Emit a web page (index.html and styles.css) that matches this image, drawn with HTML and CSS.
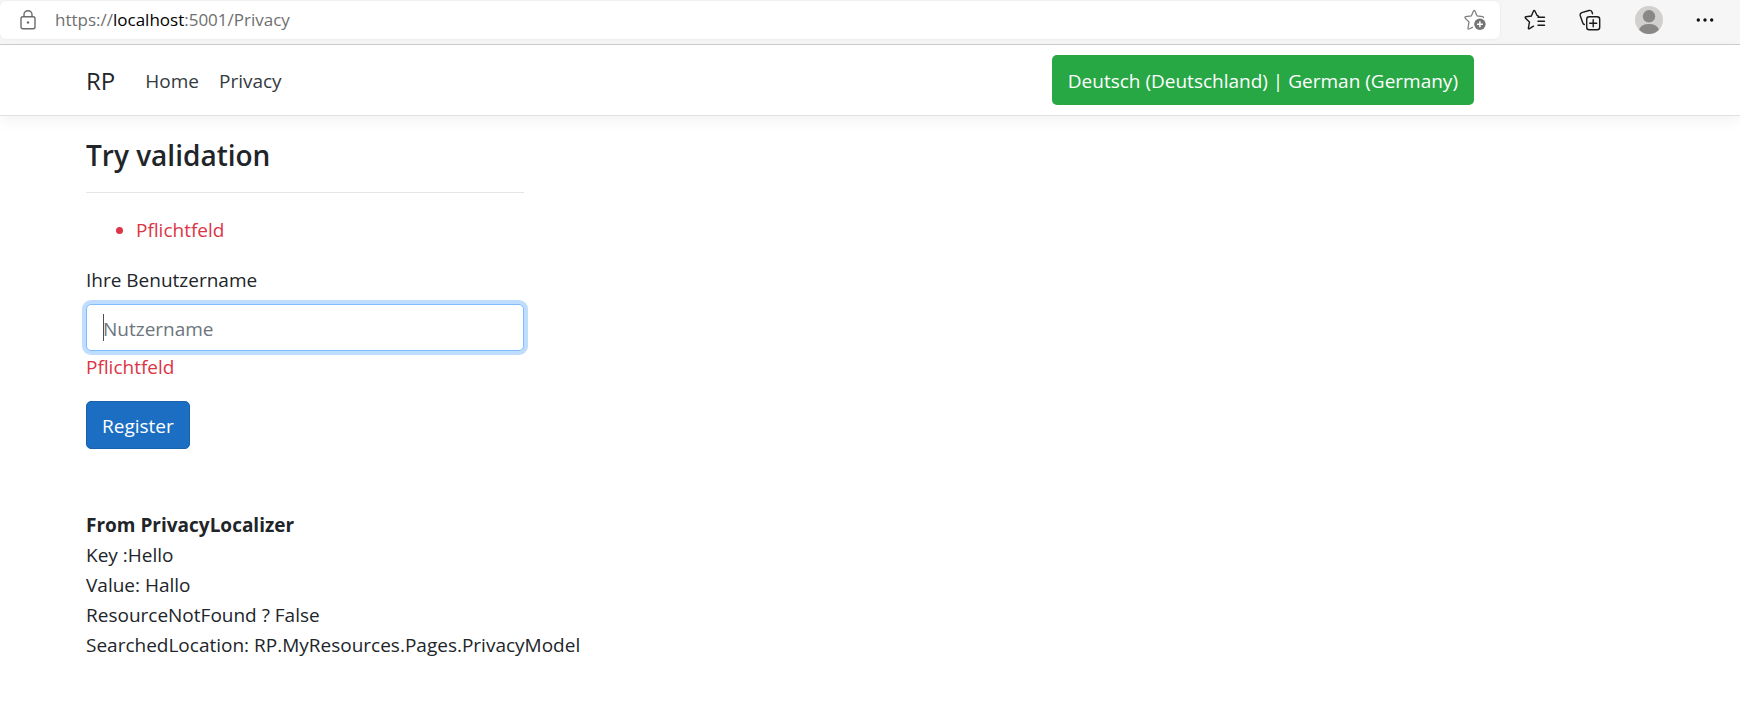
FILE: index.html
```
<!DOCTYPE html>
<html lang="de">
<head>
<meta charset="utf-8">
<title>Privacy - RP</title>
<link rel="stylesheet" href="styles.css">
</head>
<body>
<div class="browser-bar">
  <div class="address">
    <svg class="lock" width="16" height="20" viewBox="0 0 16 20" fill="none" stroke="#6b6b6b" stroke-width="1.4"><rect x="1" y="6.7" width="14" height="12" rx="1.8"/><path d="M4 6.500V4.500a4 3.800 0 0 1 8 0v2"/><circle cx="8" cy="12.500" r="1.200" fill="#6b6b6b" stroke="none"/></svg>
    <span class="url">https://<span class="host">localhost</span>:5001/Privacy</span>
    <button class="icon-button add-favorite" aria-label="Add to favorites"><svg width="22" height="22" viewBox="0 0 22 22" fill="none"><path d="M9 18.200 L5 20 Q3.800 20.300 4 19 L5 13 L1.200 9.200 Q.5 8 1.800 7.700 L7.300 7 L9.500 2 Q10.200 .9 10.900 2 L13.100 7 L18.600 7.700 Q20 8.200 19.400 9" stroke="#808080" stroke-width="1.300"/><circle cx="15.900" cy="15.300" r="5.700" fill="#737373"/><path d="M12.900 15.300h6M15.900 12.300v6" stroke="#fff" stroke-width="1.500"/></svg></button>
  </div>
  <div class="tools">
    <button class="icon-button" aria-label="Favorites"><svg width="22" height="22" viewBox="0 0 22 22" fill="none" stroke="#1b1b1b" stroke-width="1.400" stroke-linecap="round"><path d="M9.500 17.200 L5.500 19.700 Q4.200 20.300 4.400 19 L5.500 13 L1.500 9.200 Q.7 8 2 7.700 L7.300 7 L9.500 2 Q10.200 .9 10.900 2 L13.100 6.500 L14.500 7.200M14 8.200h6.500M14 12.200h6.500M14 16.200h6.500"/></svg></button>
    <button class="icon-button" aria-label="Collections"><svg width="22" height="22" viewBox="0 0 22 22" fill="none" stroke="#1b1b1b" stroke-width="1.400" stroke-linecap="round"><rect x="7.700" y="7.700" width="13" height="13" rx="2.500"/><path d="M14.200 10.700v7M10.700 14.200h7M5.300 15.500Q4.200 15.200 3.700 13.800L1.200 6.500Q.8 4.500 2.800 3.700L10 1.500Q12.200 1 13 3L13.500 4.700"/></svg></button>
    <button class="icon-button" aria-label="Profile"><svg width="28" height="28" viewBox="0 0 28 28"><circle cx="14" cy="14" r="14" fill="#d2d0ce"/><circle cx="14" cy="10.300" r="6.200" fill="#8a8886"/><path d="M4 23.800Q6 18 14 18t10 5.800Q20 28 14 28T4 23.800Z" fill="#8a8886"/></svg></button>
    <button class="icon-button" aria-label="Settings and more"><svg width="18" height="18" viewBox="0 0 18 18" fill="#111"><circle cx="2.300" cy="9" r="1.700"/><circle cx="9" cy="9" r="1.700"/><circle cx="15.700" cy="9" r="1.700"/></svg></button>
  </div>
</div>
<header class="navbar">
  <div class="container nav-inner">
    <a class="brand" href="#">RP</a>
    <nav class="links"><a href="#">Home</a><a href="#">Privacy</a></nav>
    <button class="culture">Deutsch (Deutschland) | German (Germany)</button>
  </div>
</header>
<main class="container">
  <form class="form">
    <h4 class="title">Try validation</h4>
    <hr class="rule">
    <ul class="summary"><li>Pflichtfeld</li></ul>
    <label class="label" for="username">Ihre Benutzername</label>
    <div class="field">
      <input class="input" id="username" type="text" placeholder="Nutzername">
      <span class="caret"></span>
    </div>
    <span class="error">Pflichtfeld</span>
    <button class="submit" type="button">Register</button>
  </form>
  <section class="details">
    <strong>From PrivacyLocalizer</strong>
    <div>Key :Hello</div>
    <div>Value: Hallo</div>
    <div>ResourceNotFound ? False</div>
    <div>SearchedLocation: RP.MyResources.Pages.PrivacyModel</div>
  </section>
</main>
</body>
</html>
```
FILE: styles.css
```
* { box-sizing: border-box; }
body {
  margin: 0;
  background: #fff;
  color: #212529;
  font-family: "Open Sans", "Noto Sans", sans-serif;
  font-size: 19px;
  line-height: 30px;
}
button, input { font: inherit; }

.browser-bar {
  display: flex;
  height: 45px;
  padding: 1px 12px 5px 0;
  background: #f6f6f6;
  border-bottom: 1px solid #cecece;
}
.address {
  display: flex;
  flex: 1;
  align-items: center;
  padding: 0 14px 0 20px;
  background: #fff;
  border-radius: 6px;
  box-shadow: 0 0 3px rgba(0, 0, 0, .08);
}
.url {
  flex: 1;
  margin-left: 19px;
  color: #6f6f6f;
  font-size: 17px;
}
.host { color: #000; }
.icon-button {
  display: flex;
  padding: 0;
  border: 0;
  background: none;
}
.tools {
  display: flex;
  align-items: center;
  justify-content: space-between;
  width: 228px;
  padding: 0 14px 0 24px;
}

.container {
  max-width: 1425px;
  margin-left: 67px;
  padding: 0 18px 0 19px;
}
.navbar {
  padding: 10px 0;
  border-bottom: 1px solid #dee2e6;
  box-shadow: 0 5px 15px rgba(0, 0, 0, .05);
}
.nav-inner { display: flex; align-items: center; }
.brand {
  margin-right: 30px;
  padding-top: 2px;
  color: #212529;
  font-size: 24px;
  text-decoration: none;
}
.links { display: flex; flex: 1; gap: 20px; padding-top: 2px; }
.links a { color: #343a40; text-decoration: none; }
.culture {
  height: 50px;
  padding: 2px 16px 0;
  border: 0;
  border-radius: 5px;
  background: #28a745;
  color: #fff;
}

.form {
  display: flex;
  flex-direction: column;
  align-items: stretch;
  max-width: 438px;
  padding-top: 21px;
}
.title {
  margin: 0 0 19px;
  font-size: 28px;
  font-weight: 600;
  line-height: 36px;
}
.rule {
  width: 100%;
  margin: 0;
  border: 0;
  border-top: 1px solid #e5e5e5;
}
.summary {
  margin: 22px 0 20px;
  padding-left: 50px;
  color: #dc3545;
}
.label { margin-bottom: 9px; }
.field { position: relative; }
.input {
  display: block;
  width: 100%;
  height: 47px;
  padding: 2px 16px 0;
  border: 1px solid #80bdff;
  border-radius: 5px;
  outline: 0;
  box-shadow: 0 0 0 4px #bfdeff;
}
.input::placeholder { color: #6c757d; opacity: 1; }
.caret {
  position: absolute;
  top: 10px;
  left: 17px;
  width: 1px;
  height: 27px;
  background: #495057;
}
.error { margin: 1px 0 19px; color: #dc3545; }
.submit {
  align-self: flex-start;
  height: 48px;
  padding: 2px 15px 0;
  border: 1px solid #1861ac;
  border-radius: 5px;
  background: #1b6ec2;
  color: #fff;
}
.details { padding: 61px 0 30px; }
.details strong { display: block; }
```
